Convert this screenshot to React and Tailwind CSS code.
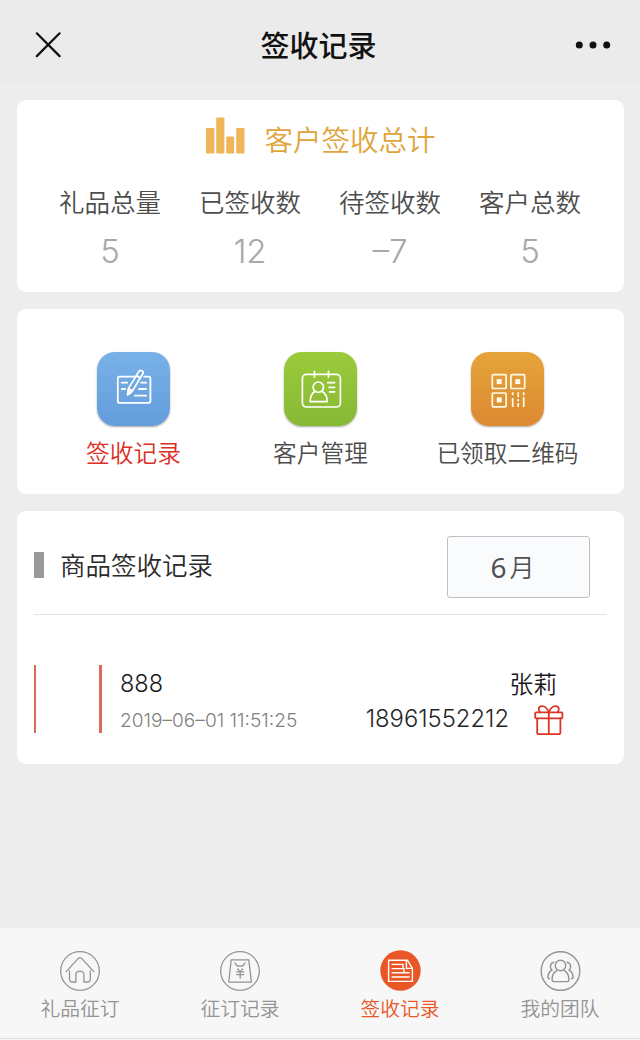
import React, { useState } from "react";

const stats = [
  { label: "礼品总量", value: "5" },
  { label: "已签收数", value: "12" },
  { label: "待签收数", value: "–7" },
  { label: "客户总数", value: "5" },
];

const EditIcon = () => (
  <svg width="73" height="74" viewBox="0 0 73 74" fill="none" stroke="#fff" strokeWidth="1.8" strokeLinecap="round" strokeLinejoin="round">
    <path d="M39 24.6H22.4a1.6 1.6 0 0 0-1.6 1.6v23a1.6 1.6 0 0 0 1.6 1.6h29.4a1.6 1.6 0 0 0 1.6-1.6v-23a1.6 1.6 0 0 0-1.6-1.6h-4.6" />
    <path d="M24.8 30.7h5.4M24.8 37h3.4M44.2 30.7h5M42 37h7.2M38 43.7h11.2" />
    <path d="M30.6 42.8l.9-6.4 10.4-17a2.3 2.3 0 0 1 3.9 2.4L35.5 38.9l-4.9 3.9zM31.5 36.4l4 2.5M39.3 23.6l3.9 2.5" />
    <path d="M30.6 42.8l.6-4.4 3 2z" fill="#fff" />
  </svg>
);

const CustomerIcon = () => (
  <svg width="73" height="74" viewBox="0 0 73 74" fill="none" stroke="#fff" strokeWidth="1.7" strokeLinecap="round" strokeLinejoin="round">
    <rect x="18.4" y="22.4" width="38" height="32.6" rx="4" />
    <path d="M30.5 19.3v5.8M44.5 19.3v5.8" />
    <circle cx="34.3" cy="35.2" r="5.2" />
    <path d="M30.8 39.5c-2.9 1.8-4.6 5.2-4.6 10.2h17c0-5-1.7-8.4-5.1-10.2" />
    <path d="M43.8 30.7h6.8M45 35.4h5.6M45.6 39.9h5" />
  </svg>
);

const QrIcon = () => (
  <svg width="73" height="74" viewBox="0 0 73 74" fill="none" stroke="#fffbe8" strokeWidth="1.7">
    <rect x="21.3" y="22.7" width="13.8" height="13.8" rx="1" />
    <rect x="39.9" y="22.7" width="13.8" height="13.8" rx="1" />
    <rect x="21.3" y="41" width="13.8" height="13.8" rx="1" />
    <g fill="#fffbe8" stroke="none">
      <rect x="25.7" y="27.1" width="5" height="5" />
      <rect x="44.3" y="27.1" width="5" height="5" />
      <rect x="25.7" y="45.4" width="5" height="5" />
    </g>
    <path d="M41.7 40.3v3M41.7 46v9M47.2 40.3v5M47.2 47v2.2M47.2 51v4M52.7 40.3v3M52.7 45v10" />
  </svg>
);

const GiftIcon = () => (
  <svg width="30" height="31" viewBox="0 0 30 31" fill="none" stroke="#dc3427" strokeWidth="1.8" strokeLinejoin="round" strokeLinecap="round">
    <rect x="1.2" y="7.3" width="27.2" height="6" rx="1" />
    <path d="M3.2 13.3v14.4a1.5 1.5 0 0 0 1.5 1.5h20.2a1.5 1.5 0 0 0 1.5-1.5V13.3M14.8 7.3v21.9" />
    <path d="M14.8 7.3C13.5 3.5 10.5.9 7.5 1.2 4.5 1.5 3.9 4.4 5.9 7.3M14.8 7.3c1.3-3.8 4.3-6.4 7.3-6.1 3 .3 3.6 3.2 1.6 6.1" />
  </svg>
);

const HomeIcon = () => (
  <svg width="42" height="42" viewBox="0 0 42 42" fill="none" stroke="currentColor" strokeWidth="1.3" strokeLinecap="round" strokeLinejoin="round">
    <circle cx="21" cy="21" r="19.3" />
    <path d="M7.2 21.6L19.3 8.4a2.2 2.2 0 0 1 3.3 0l12.2 13.2" />
    <path d="M10.5 21v8.6a2.4 2.4 0 0 0 2.4 2.4h4V24.4a3 3 0 0 1 3-3h2a3 3 0 0 1 3 3V32h4a2.4 2.4 0 0 0 2.4-2.4V21" />
  </svg>
);

const OrderIcon = () => (
  <svg width="42" height="42" viewBox="0 0 42 42" fill="none" stroke="currentColor" strokeWidth="1.3" strokeLinecap="round" strokeLinejoin="round">
    <circle cx="21" cy="21" r="19.3" />
    <path d="M12.2 9.8h17.6l2.6 22.3H9.8z" />
    <path d="M16.2 13c1 4.2 8.6 4.2 9.6 0" />
    <path d="M18.8 19l2.4 2.8 2.4-2.8M17.6 21.8h7.2M17.6 24.6h7.2M21.2 21.8v6.6" />
  </svg>
);

const RecordIcon = () => (
  <svg width="42" height="42" viewBox="0 0 42 42" fill="none" stroke="#fff" strokeWidth="1.4">
    <circle cx="21.5" cy="20.5" r="20.2" fill="#ea5727" stroke="none" />
    <path d="M9.6 10.2h18.8l5 8.2v13H9.6z" />
    <path d="M27.4 10.2v8.2h6" />
    <path d="M12.6 14.4h11.4v4.2M12.6 18.6h12.4v4.2M12.6 22.8h18M12.6 27h18" />
  </svg>
);

const TeamIcon = () => (
  <svg width="42" height="42" viewBox="0 0 42 42" fill="none" stroke="currentColor" strokeWidth="1.4" strokeLinecap="round" strokeLinejoin="round">
    <circle cx="21.5" cy="21" r="19.3" />
    <circle cx="21.5" cy="15.5" r="5.2" />
    <path d="M17.7 20.6c-3 1.6-4.6 4.8-4.6 9.2 0 1.2.6 1.8 1.8 1.8h13.2c1.2 0 1.8-.6 1.8-1.8 0-4.4-1.6-7.6-4.6-9.2" />
    <path d="M14.9 12.2c-3.6.6-4.8 5.4-1.8 7.8-2.4 1-4 3.7-4.2 7.6.1.9.6 1.2 1.6 1.2M28.1 12.2c3.6.6 4.8 5.4 1.8 7.8 2.4 1 4 3.7 4.2 7.6-.1.9-.6 1.2-1.6 1.2" />
  </svg>
);

const actions = [
  { label: "签收记录", icon: <EditIcon />, tile: "from-[#79b2e8] to-[#639cda]", text: "text-[#dc2f26]" },
  { label: "客户管理", icon: <CustomerIcon />, tile: "from-[#9bca3b] to-[#87b935]", text: "text-[#4d4d4d]" },
  { label: "已领取二维码", icon: <QrIcon />, tile: "from-[#e5a43a] to-[#dd8932]", text: "text-[#4d4d4d]" },
];

const tabs = [
  { label: "礼品征订", icon: <HomeIcon /> },
  { label: "征订记录", icon: <OrderIcon /> },
  { label: "签收记录", icon: <RecordIcon /> },
  { label: "我的团队", icon: <TeamIcon /> },
];

const App = () => {
  const [activeTab, setActiveTab] = useState(2);

  return (
    <div className="w-[640px] h-[1040px] flex flex-col overflow-hidden bg-[#ededed] font-['Inter','Noto_Sans_CJK_SC',sans-serif] font-[350]">
      <header className="h-[83px] shrink-0 flex items-center justify-between pl-[35px] pr-[29px] pt-[7px] bg-[#ebebeb]">
        <svg width="26" height="26" viewBox="0 0 26 26" stroke="#111" strokeWidth="2.2" strokeLinecap="round">
          <path d="M1.8 1.3l22.8 22.8M24.6 1.3L1.8 24.1" />
        </svg>
        <h1 className="pt-[3px] pl-px text-[29px] leading-10 font-medium text-[#111]">签收记录</h1>
        <svg width="36" height="10" viewBox="0 0 36 10" fill="#111">
          <circle cx="4.3" cy="5" r="3.5" />
          <circle cx="18" cy="5" r="3.5" />
          <circle cx="31.7" cy="5" r="3.5" />
        </svg>
      </header>

      <main className="flex-1 flex flex-col gap-[17px] pt-[17px] pl-[17px] pr-4">
        <section className="h-[192px] rounded-[9px] bg-white pl-[23px] pr-6">
          <div className="flex justify-center gap-[19px] pt-[17px] pl-[2px]">
            <svg width="39" height="38" viewBox="0 0 39 38" fill="#eeb658">
              <rect x="0" y="11" width="8.4" height="25.5" rx="1" />
              <rect x="10.2" y="0.5" width="8.2" height="36" rx="1" />
              <rect x="20.2" y="19.5" width="8" height="17" rx="1" />
              <rect x="30.2" y="11" width="8.3" height="25.5" rx="1" />
            </svg>
            <h2 className="pt-[2px] text-[28.5px] leading-[44px] text-[#dfa53c]">客户签收总计</h2>
          </div>
          <div className="grid grid-cols-4 pt-[21px] text-center">
            {stats.map((item) => (
              <div key={item.label}>
                <div className="text-[25.5px] leading-[38px] text-[#4d4d4d]">{item.label}</div>
                <div className="pt-[9px] text-[33px] leading-[40px] font-light text-[#a8a8a8]">{item.value}</div>
              </div>
            ))}
          </div>
        </section>

        <section className="h-[185px] rounded-[9px] bg-white pl-[23px] pr-[23px] pt-[43px] grid grid-cols-3">
          {actions.map((item) => (
            <button key={item.label} className="flex flex-col items-center">
              <span className={`w-[73px] h-[74px] rounded-[18px] bg-linear-to-b shadow-[0_1px_2px_rgba(0,0,0,0.35)] ${item.tile}`}>
                {item.icon}
              </span>
              <span className={`pt-[10px] text-[23.7px] leading-[36px] whitespace-nowrap ${item.text}`}>{item.label}</span>
            </button>
          ))}
        </section>

        <section className="h-[253px] rounded-[9px] bg-white px-[17px]">
          <div className="h-[104px] flex items-center justify-between border-b border-[#e3e3e3] pr-[17px]">
            <div className="flex items-center gap-4 pt-[5px]">
              <span className="w-[10px] h-[26px] bg-[#999]" />
              <h3 className="pt-px text-[25.5px] leading-[38px] text-[#2b2b2b]">商品签收记录</h3>
            </div>
            <button className="w-[143px] h-[62px] mt-[8px] flex items-center justify-center pr-[12px] rounded-[3px] border-[1.5px] border-[#c0c0c2] bg-[#fafbfd] text-[#4f5052]">
              <span className="font-['Noto_Sans'] text-[28px] font-normal">6</span>
              <span className="pl-[3px] pt-[5px] text-[25px]">月</span>
            </button>
          </div>

          <div className="flex pt-[50px]">
            <div className="w-[68px] h-[68px] border-l-2 border-r-3 border-[#dc6c5a]" />
            <div className="pl-[18px] pt-[2px]">
              <div className="text-[23.5px] leading-[34px] text-[#1a1a1a]">888</div>
              <div className="pt-[7px] text-[19.1px] leading-6 font-light text-[#808080]">2019–06–01 11:51:25</div>
            </div>
            <div className="ml-auto flex flex-col items-end">
              <div className="pt-px pr-[50px] text-[23.7px] leading-[38px] text-[#1a1a1a]">张莉</div>
              <div className="flex items-start pr-[43px] gap-[25px]">
                <span className="text-[23.8px] leading-[30px] text-[#262626]">18961552212</span>
                <span className="pt-px"><GiftIcon /></span>
              </div>
            </div>
          </div>
        </section>
      </main>

      <nav className="h-[112px] shrink-0 bg-[#f7f7f7] pb-px">
        <div className="h-[111px] grid grid-cols-4 border-b border-[#dfdfdf]">
          {tabs.map((tab, index) => (
            <button
              key={tab.label}
              className={`flex flex-col items-center pt-[22px] ${activeTab === index ? "text-[#ea5727]" : "text-[#949494]"}`}
              onClick={() => setActiveTab(index)}
            >
              {tab.icon}
              <span className="pt-[2px] text-[19.8px] leading-[30px]">{tab.label}</span>
            </button>
          ))}
        </div>
      </nav>
    </div>
  );
};

export default App;
